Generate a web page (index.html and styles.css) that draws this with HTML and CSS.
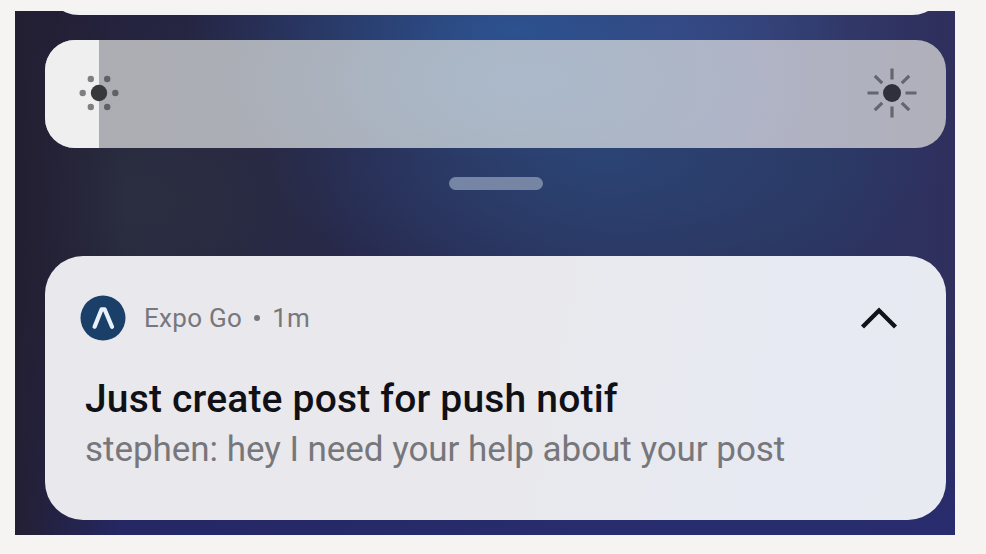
FILE: index.html
```html
<!DOCTYPE html>
<html lang="en">
<head>
<meta charset="utf-8">
<title>Notification shade</title>
<link rel="stylesheet" href="styles.css">
</head>
<body>
<main class="shade">
  <div class="tile"></div>
  <div class="slider">
    <div class="slider-fill"></div>
    <svg class="sun-low" width="42" height="42" viewBox="-21 -21 42 42">
      <g fill="#222328" fill-opacity=".55">
        <circle cx="-16.3" r="3.2"/><circle cx="16.3" r="3.2"/>
        <circle cx="-8.2" cy="-14" r="3.2"/><circle cx="8.2" cy="-14" r="3.2"/>
        <circle cx="-8.2" cy="14" r="3.2"/><circle cx="8.2" cy="14" r="3.2"/>
      </g>
      <circle r="8.2" fill="#38383c"/>
    </svg>
    <svg class="sun-high" width="52" height="52" viewBox="-26 -26 52 52">
      <path d="M0-24.5V-13.5M0 13.5V24.5M-24.5 0H-13.5M13.5 0H24.5M-17.2-17.2L-9.8-9.8M9.8 9.8L17.2 17.2M-17.2 17.2L-9.8 9.8M9.8-9.8L17.2-17.2" stroke="#65656e" stroke-width="3.2" fill="none"/>
      <circle r="9" fill="#2f303b"/>
    </svg>
  </div>
  <div class="handle"></div>
  <article class="card">
    <header class="card-head">
      <svg class="logo" width="46" height="46" viewBox="-23 -23 46 46">
        <circle r="22.5" fill="#1a3f69"/>
        <path d="M-8.4 8.7L-1.4-8.7H1.6L9 8.7" fill="none" stroke="#e9f2fb" stroke-width="4.2" stroke-linecap="round" stroke-linejoin="round"/>
      </svg>
      <div class="meta"><span>Expo Go</span><span class="dot"></span><span>1m</span></div>
      <svg class="chevron" width="38" height="24" viewBox="0 0 38 24">
        <path d="M2.5 21L19 4.5L35.5 21" fill="none" stroke="#121318" stroke-width="4.4"/>
      </svg>
    </header>
    <h1 class="title">Just create post for push notif</h1>
    <p class="body">stephen: hey I need your help about your post</p>
  </article>
</main>
</body>
</html>
```
FILE: styles.css
```css
* { box-sizing: border-box; }
body {
  margin: 0;
  padding: 11px 31px 19px 15px;
  height: 554px;
  background: #f5f4f2;
  font-family: Roboto, "Liberation Sans", sans-serif;
}
.shade {
  height: 524px;
  padding: 0 9px 0 30px;
  overflow: hidden;
  display: flex;
  flex-direction: column;
  background:
    linear-gradient(90deg, #231f33 0, rgba(35, 31, 51, 0) 110px),
    radial-gradient(ellipse 330px 130px at 500px 20px, #2c528f 0, rgba(44, 82, 143, 0) 100%),
    radial-gradient(ellipse 260px 100px at 650px 20px, #3d437f 0, rgba(61, 67, 127, 0) 100%),
    radial-gradient(ellipse 340px 150px at 590px 145px, #2b4474 0, rgba(43, 68, 116, 0) 100%),
    radial-gradient(ellipse 230px 200px at 130px 190px, #2b2f40 0, rgba(43, 47, 64, 0) 100%),
    linear-gradient(180deg, rgba(38, 42, 115, 0) 55%, rgba(38, 42, 115, .75) 100%),
    linear-gradient(90deg, #221f38 0, #27274a 32%, #2b345f 62%, #2b3560 85%, #302f5e 100%);
}
.tile {
  height: 72px;
  margin-top: -68.5px;
  flex: none;
  border-radius: 34px;
  background: #f0f1f5;
}
.slider {
  position: relative;
  flex: none;
  height: 108px;
  margin-top: 25px;
  padding: 0 28px 1px 33px;
  display: flex;
  align-items: center;
  justify-content: space-between;
  border-radius: 30px;
  overflow: hidden;
  background:
    radial-gradient(ellipse 300px 150px at 480px 40px, #abbacb 0, rgba(171, 186, 203, 0) 100%),
    linear-gradient(90deg, #acadb2 0, #aaafb9 45%, #b0b3c6 75%, #b0b0bb 100%);
}
.slider-fill {
  position: absolute;
  inset: 0 auto 0 0;
  width: 54px;
  background: #efeff0;
}
.sun-low, .sun-high { position: relative; }
.handle {
  flex: none;
  width: 94px;
  height: 13px;
  margin: 29.5px 0 0 403.5px;
  border-radius: 7px;
  background: #7685a3;
}
.card {
  flex: none;
  height: 264px;
  margin-top: 66px;
  padding: 39px 48px 0 35px;
  border-radius: 38px;
  background: linear-gradient(100deg, #e9e8ec 0, #e9e9ed 55%, #e7eaf3 82%, #e8eaf1 100%);
}
.card-head { display: flex; align-items: center; height: 46px; }
.meta {
  display: flex;
  align-items: center;
  flex: 1;
  margin-left: 18px;
  font-size: 26px;
  line-height: 46px;
  letter-spacing: .3px;
  color: #77777c;
}
.dot {
  width: 6px;
  height: 6px;
  margin: 0 12px;
  border-radius: 50%;
  background: #77777c;
}
.title {
  margin: 33px 0 0 5px;
  font-size: 39px;
  font-weight: 500;
  line-height: 50px;
  letter-spacing: .18px;
  color: #101116;
  white-space: nowrap;
}
.body {
  margin: 2px 0 0 5px;
  font-size: 35px;
  line-height: 48px;
  letter-spacing: -.04px;
  color: #77777b;
  white-space: nowrap;
}
```
